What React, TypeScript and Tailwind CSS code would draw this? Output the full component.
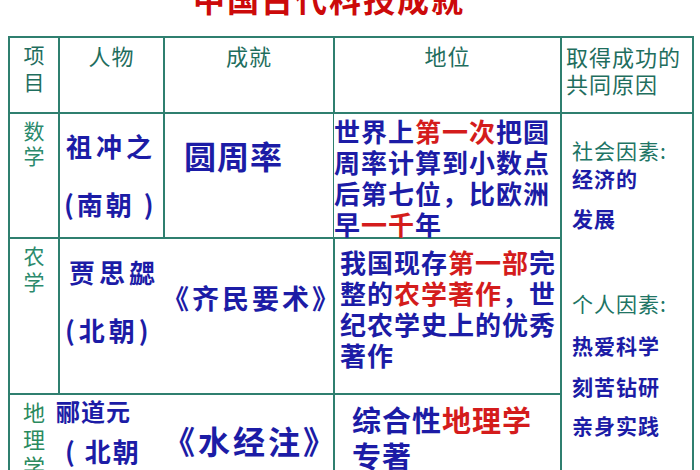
const teal = "text-[#1f6e5e]";

function Lines({ lines, className }: { lines: React.ReactNode[]; className: string }) {
  return (
    <div className={className}>
      {lines.map((l, i) => (
        <div key={i}>{l}</div>
      ))}
    </div>
  );
}

const R = ({ children }: { children: React.ReactNode }) => <span className="text-[#d41c1c]">{children}</span>;

export default function App() {
  return (
    <div
      className="w-[700px] h-[470px] overflow-hidden bg-white"
      style={{ fontFamily: '"Noto Sans CJK SC", "Noto Sans", sans-serif' }}
    >
      {/* 标题（上半部分被截掉） */}
      <div className="h-[36px] overflow-hidden">
        <div className="-mt-[18px] pl-[193px] text-[32px] leading-none tracking-[2px] font-bold text-[#cc0a0a]">
          中国古代科技成就
        </div>
      </div>

      <div className="ml-[8px] w-[686px] grid grid-cols-[48px_103px_168px_225px_130px] grid-rows-[74px_123px_154px_120px] gap-[2px] p-[2px] bg-[#2f7f6f]">
        {/* 表头 */}
        <div className="bg-white pt-[3px]">
          <Lines lines={["项", "目"]} className={`flex flex-col items-center text-[21px] leading-[27px] ${teal}`} />
        </div>
        <div className={`bg-white pt-[4px] text-center text-[22px] leading-[27px] tracking-[1px] ${teal}`}>人物</div>
        <div className={`bg-white pt-[4px] text-center text-[22px] leading-[27px] tracking-[1px] ${teal}`}>成就</div>
        <div className={`bg-white pt-[4px] text-center text-[22px] leading-[27px] tracking-[1px] ${teal}`}>地位</div>
        <div className={`bg-white pt-[5px] pl-[4px] text-[22px] leading-[27px] tracking-[1px] ${teal}`}>
          取得成功的
          <br />
          共同原因
        </div>

        {/* 数学 */}
        <div className="bg-white pt-[4px]">
          <Lines lines={["数", "学"]} className="flex flex-col items-center text-[21px] leading-[25px] text-[#2b8a6c]" />
        </div>
        <div className="bg-white pt-[3px] pl-[6px] text-[26px] leading-[58px] tracking-[4px] font-bold text-[#1c1ca6] whitespace-nowrap">
          <div>祖冲之</div>
          <div className="-ml-[2px] tracking-[3px]">(南朝 )</div>
        </div>
        <div className="bg-white pt-[21px] pl-[19px] text-[32px] leading-[40px] tracking-[1px] font-bold text-[#1c1ca6]">
          圆周率
        </div>
        <div className="bg-white pt-[1px] -ml-[1px] text-[26px] leading-[31px] tracking-[1px] font-bold text-[#1c1ca6] whitespace-nowrap">
          <div>
            世界上<R>第一次</R>把圆
          </div>
          <div>周率计算到小数点</div>
          <div>后第七位，比欧洲</div>
          <div>
            早<R>一千</R>年
          </div>
        </div>

        {/* 共同原因（合并单元格） */}
        <div className="bg-white col-start-5 row-start-2 row-span-3 pt-[22px] pl-[10px] text-[21px] leading-[28px] tracking-[1px]">
          <div className="text-[#207464]">社会因素:</div>
          <div className="font-bold text-[#1c1ca6]">经济的</div>
          <div className="mt-[12px] font-bold text-[#1c1ca6]">发展</div>
          <div className="mt-[57px] text-[#207464]">个人因素:</div>
          <div className="mt-[14px] font-bold text-[#1c1ca6]">热爱科学</div>
          <div className="mt-[13px] font-bold text-[#1c1ca6]">刻苦钻研</div>
          <div className="mt-[11px] font-bold text-[#1c1ca6]">亲身实践</div>
        </div>

        {/* 农学 */}
        <div className="bg-white pt-[3px]">
          <Lines lines={["农", "学"]} className="flex flex-col items-center text-[21px] leading-[26px] text-[#2b8a6c]" />
        </div>
        <div className="bg-white pt-[4px] pl-[9px] text-[26px] leading-[58px] tracking-[4px] font-bold text-[#1c1ca6] whitespace-nowrap">
          <div>贾思勰</div>
          <div className="-ml-[4px]">(北朝)</div>
        </div>
        <div className="bg-white pt-[41px] -ml-[3px] text-[27px] leading-[36px] tracking-[3px] font-bold text-[#1c1ca6] whitespace-nowrap">
          《齐民要术》
        </div>
        <div className="bg-white pt-[7px] pl-[5px] text-[26px] leading-[31px] tracking-[1px] font-bold text-[#1c1ca6] whitespace-nowrap">
          <div>
            我国现存<R>第一部</R>完
          </div>
          <div>
            整的<R>农学著作</R>，世
          </div>
          <div>纪农学史上的优秀</div>
          <div>著作</div>
        </div>

        {/* 地理学 */}
        <div className="bg-white pt-[3px]">
          <Lines lines={["地", "理", "学"]} className="flex flex-col items-center text-[22px] leading-[27px] text-[#2b8a5e]" />
        </div>
        <div className="bg-white pt-[2px] -ml-[4px] font-bold text-[#1c1ca6] whitespace-nowrap">
          <div className="text-[24px] leading-[28px] tracking-[1px]">郦道元</div>
          <div className="mt-[12px] pl-[9px] text-[26px] leading-[28px] tracking-[2px]">( 北朝</div>
        </div>
        <div className="bg-white pt-[25px] -ml-[2px] text-[32px] leading-[40px] tracking-[3px] font-bold text-[#1c1ca6] whitespace-nowrap">
          《水经注》
        </div>
        <div className="bg-white pt-[6px] pl-[17px] text-[29px] leading-[36px] tracking-[1px] font-bold text-[#1c1ca6] whitespace-nowrap">
          <div>
            综合性<R>地理学</R>
          </div>
          <div>专著</div>
        </div>
      </div>
    </div>
  );
}
